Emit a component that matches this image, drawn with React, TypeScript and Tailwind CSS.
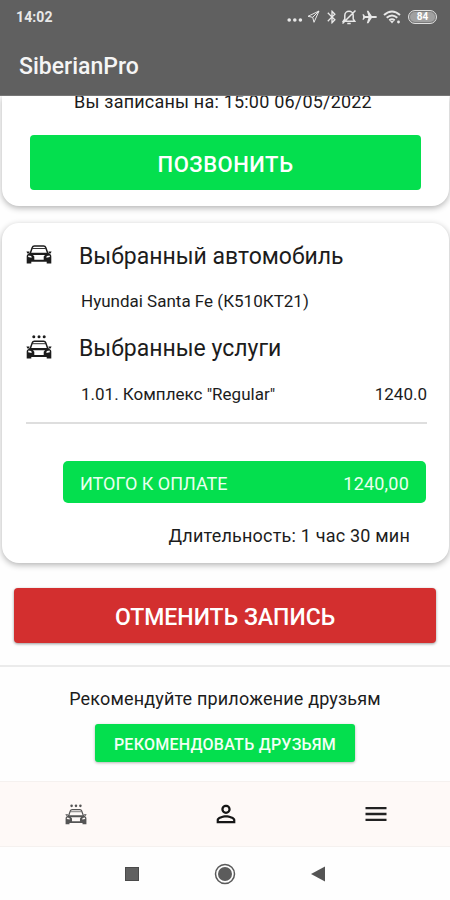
import type { ReactNode } from 'react';
import { MdBluetooth, MdMenu, MdPersonOutline } from 'react-icons/md';

const CarShape = () => (
  <>
    {/* крыша и лобовое стекло */}
    <path d="M4 9 6.3 2.5Q6.8 1 8.4 1h9.2q1.6 0 2.1 1.5L22 9" fill="none" stroke="currentColor" strokeWidth="1.5" />
    <path d="M6.4 3.5h13.2" stroke="currentColor" strokeWidth="0.9" />
    {/* кузов с фарами */}
    <path
      fill="currentColor"
      fillRule="evenodd"
      d="M4 7.8h18l2.6 1.8q.7.6.7 1.8V18.4h-4.6v-1.6H5.3v1.6H.7v-7q0-1.2.7-1.8ZM7 10l1.3 1.6v3.2h9.4v-3.2L19 10ZM2.4 10.4l-.3 1.6 3.6.8-.5-1.9ZM23.6 10.4l.3 1.6-3.6.8.5-1.9Z"
    />
    <path fill="currentColor" d="M.4 6.4h3.2l-.6 2H1.4ZM25.6 6.4h-3.2l.6 2h1.6Z" />
  </>
);

const CarIcon = () => (
  <svg className="mb-1 h-[19px] w-[26px]" viewBox="0 0 26 19">
    <CarShape />
  </svg>
);

const WashIcon = ({ className }: { className: string }) => (
  <svg className={className} viewBox="0 0 26 24">
    <circle cx="7.8" cy="1.8" r="1.5" fill="currentColor" />
    <circle cx="13" cy="1.8" r="1.5" fill="currentColor" />
    <circle cx="18.2" cy="1.8" r="1.5" fill="currentColor" />
    <g transform="translate(0 5.2)">
      <CarShape />
    </g>
  </svg>
);

const StatusBar = () => (
  <div className="flex h-[33px] items-center justify-between pr-[13px] pl-4 text-[#e8e8e8]">
    <span className="pt-px text-[14px] font-bold tracking-[0.1px]">14:02</span>
    <div className="flex items-center">
      <svg className="mt-[7px] mr-[4px] h-1 w-4" viewBox="0 0 16 4" fill="currentColor">
        <circle cx="2.2" cy="2" r="1.8" />
        <circle cx="7.8" cy="2" r="1.8" />
        <circle cx="13.4" cy="2" r="1.8" />
      </svg>
      <svg className="mr-[4px] h-[13px] w-[13px]" viewBox="0 0 13 13" fill="none" stroke="currentColor" strokeWidth="1">
        <path d="M12 1 1 6.3l4.7 1 1.3 5ZM12 1 5.7 7.3" />
      </svg>
      <MdBluetooth className="mr-[1px] h-4 w-4" />
      <svg className="mr-[5px] h-4 w-4" viewBox="0 0 16 16" fill="none" stroke="currentColor" strokeWidth="1.5">
        <path d="M2.3 12.2h11.4L12.2 10V6.5a4.2 4.2 0 0 0-8.4 0V10ZM6.3 14.4h3.4M1.5 14.5l13-13" />
      </svg>
      <svg className="mr-[6px] h-[14px] w-[15px]" viewBox="0 0 15 14" fill="currentColor">
        <path d="M15 7q0-1.1-1.6-1.1H9.8L6.4.8H4.8l1.6 5.1H3L1.7 4.2H.5L1.2 7 .5 9.8h1.2L3 8.1h3.4l-1.6 5.1h1.6l3.4-5.1h3.6Q15 8.1 15 7Z" />
      </svg>
      <svg className="mr-[7px] h-[14px] w-[18px]" viewBox="0 0 18 14" fill="none" stroke="currentColor" strokeWidth="2">
        <path d="M1 5Q9-2 17 5M3.7 7.8q5.3-4.7 10.6 0M6.3 10.4Q9 8.2 11.7 10.4" />
        <path d="m7 11 2 2.4 2-2.4Z" fill="currentColor" stroke="none" />
        <circle cx="15.5" cy="12" r="1.4" fill="currentColor" stroke="none" />
      </svg>
      <span className="flex h-[14px] w-[29px] items-center justify-center rounded-full border-[1.5px] border-[#e0e0e0] bg-[#7a7a7a] p-px">
        <span className="flex h-full w-full items-center justify-center rounded-full bg-[#a0a0a0] text-[10px] leading-none font-bold text-white">
          84
        </span>
      </span>
    </div>
  </div>
);

const SectionTitle = ({ icon, children }: { icon: ReactNode; children: ReactNode }) => (
  <div className="flex h-8 items-center">
    <span className="flex w-[53px] shrink-0">{icon}</span>
    <h2 className="pt-[2px] text-[23px] whitespace-nowrap">{children}</h2>
  </div>
);

export default function App() {
  return (
    <div className="flex h-[900px] w-[450px] flex-col overflow-hidden bg-[#fefefe] font-['Roboto','Liberation_Sans',sans-serif] text-[#1c1c1c]">
      <header className="z-10 h-24 shrink-0 border-b border-[#777] bg-[#606060]">
        <StatusBar />
        <h1 className="pt-px pl-[19px] text-[23px] leading-[66px] font-medium text-[#f5f5f5]">SiberianPro</h1>
      </header>

      <main className="flex h-[685px] shrink-0 flex-col">
        <section className="mr-px ml-[2px] flex h-[110px] shrink-0 flex-col rounded-b-[17px] bg-white px-7 shadow-[0_2px_6px_rgba(0,0,0,0.3)]">
          <p className="-mt-[6px] mb-[21px] -ml-[5px] text-center text-[18px] leading-6 tracking-[0.2px] whitespace-nowrap">
            Вы записаны на: 15:00 06/05/2022
          </p>
          <button className="h-[55px] w-[391px] shrink-0 rounded-[4px] bg-[#04df4e] pt-[3px] text-[22px] font-medium tracking-[0.5px] text-white">
            ПОЗВОНИТЬ
          </button>
        </section>

        <section className="mt-[17px] mr-px ml-[2px] h-[340px] shrink-0 rounded-[17px] bg-white pt-[17px] pr-[22px] pl-[24px] shadow-[0_2px_6px_rgba(0,0,0,0.3)]">
          <SectionTitle icon={<CarIcon />}>Выбранный автомобиль</SectionTitle>
          <p className="mt-[17px] pl-[55px] text-[17px] leading-6 whitespace-nowrap">Hyundai Santa Fe (К510КТ21)</p>
          <div className="mt-[19px]">
            <SectionTitle icon={<WashIcon className="mb-[2px] h-6 w-[26px]" />}>Выбранные услуги</SectionTitle>
          </div>
          <div className="mt-[18px] flex justify-between pl-[55px] text-[17px] leading-6 whitespace-nowrap">
            <span>1.01. Комплекс "Regular"</span>
            <span>1240.0</span>
          </div>
          <hr className="mt-[16px] border-t-2 border-[#dedede]" />
          <div className="mt-[37px] mr-px ml-[37px] flex h-[42px] items-center justify-between rounded-[5px] bg-[#04df4e] px-[17px] pt-[2px] text-[18px] text-[#eafff0]">
            <span>ИТОГО К ОПЛАТЕ</span>
            <span className="tracking-[0.2px]">1240,00</span>
          </div>
          <p className="mt-[21px] mr-[17px] text-right text-[18px] leading-6 tracking-[0.2px] whitespace-nowrap">
            Длительность: 1 час 30 мин
          </p>
        </section>

        <button className="mx-[14px] mt-[25px] h-[55px] shrink-0 rounded-[4px] bg-[#d32f2f] pt-[5px] text-[23px] font-medium text-white shadow-[0_1px_3px_rgba(0,0,0,0.4)]">
          ОТМЕНИТЬ ЗАПИСЬ
        </button>

        <div className="mt-[22px] flex flex-col items-center border-t-2 border-[#ebebeb]">
          <p className="mt-5 text-[18px] leading-6 tracking-[0.17px] whitespace-nowrap">Рекомендуйте приложение друзьям</p>
          <button className="mt-[13px] h-[38px] w-[260px] rounded-[3px] bg-[#04df4e] pt-[3px] text-[16px] font-medium tracking-[0.25px] whitespace-nowrap text-[#f4fff6] shadow-[0_1px_3px_rgba(0,0,0,0.3)]">
            РЕКОМЕНДОВАТЬ ДРУЗЬЯМ
          </button>
        </div>
      </main>

      <nav className="grid h-[66px] shrink-0 grid-cols-3 place-items-center border-y border-[#f5f1ef] bg-[#fef9f7]">
        <WashIcon className="ml-[2px] h-[21px] w-[22px] text-[#555]" />
        <MdPersonOutline className="ml-px h-[28px] w-[28px] text-[#161616]" />
        <MdMenu className="ml-px h-[28px] w-[28px] text-[#222]" />
      </nav>

      {/* системная навигация */}
      <div className="flex h-[53px] items-center justify-center gap-[75px] bg-[#fefefe]">
        <span className="h-[14px] w-[14px] border border-[#4a4a4a] bg-[#606060]" />
        <svg className="h-[22px] w-[22px]" viewBox="0 0 22 22">
          <circle cx="11" cy="11" r="9.5" fill="none" stroke="#5a5a5a" strokeWidth="1.5" />
          <circle cx="11" cy="11" r="7" fill="#5c5c5c" />
        </svg>
        <svg className="h-4 w-[14px]" viewBox="0 0 14 16">
          <path d="M0 8 14 .5v15Z" fill="#545454" />
        </svg>
      </div>
    </div>
  );
}
